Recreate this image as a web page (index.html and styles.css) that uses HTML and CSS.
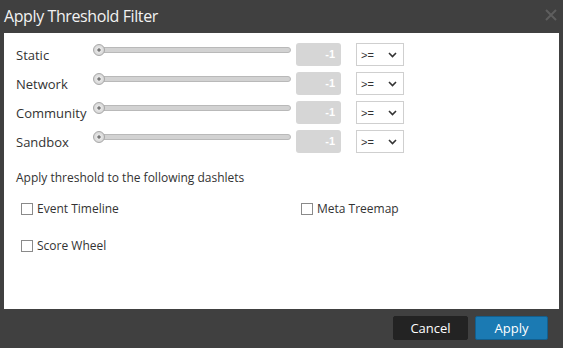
FILE: index.html
```html
<!DOCTYPE html>
<html>
<head>
<meta charset="utf-8">
<link rel="stylesheet" href="styles.css">
</head>
<body>
<div class="dialog">
  <div class="header">
    <span class="title">Apply Threshold Filter</span>
    <svg class="close" width="12" height="12" viewBox="0 0 12 12"><path d="M1 1 L11 11 M11 1 L1 11" stroke="#5e5e5e" stroke-width="2" fill="none"/></svg>
  </div>
  <div class="panel">
    <div class="rows">
      <div class="row">
        <span class="label">Static</span>
        <div class="slider"><div class="track"></div><div class="thumb"></div></div>
        <div class="num">-1</div>
        <div class="select"><span>&gt;=</span><svg width="9" height="6" viewBox="0 0 9 6"><path d="M1 1 L4.5 4.5 L8 1" stroke="#333" stroke-width="1.6" fill="none"/></svg></div>
      </div>
      <div class="row">
        <span class="label">Network</span>
        <div class="slider"><div class="track"></div><div class="thumb"></div></div>
        <div class="num">-1</div>
        <div class="select"><span>&gt;=</span><svg width="9" height="6" viewBox="0 0 9 6"><path d="M1 1 L4.5 4.5 L8 1" stroke="#333" stroke-width="1.6" fill="none"/></svg></div>
      </div>
      <div class="row">
        <span class="label">Community</span>
        <div class="slider"><div class="track"></div><div class="thumb"></div></div>
        <div class="num">-1</div>
        <div class="select"><span>&gt;=</span><svg width="9" height="6" viewBox="0 0 9 6"><path d="M1 1 L4.5 4.5 L8 1" stroke="#333" stroke-width="1.6" fill="none"/></svg></div>
      </div>
      <div class="row">
        <span class="label">Sandbox</span>
        <div class="slider"><div class="track"></div><div class="thumb"></div></div>
        <div class="num">-1</div>
        <div class="select"><span>&gt;=</span><svg width="9" height="6" viewBox="0 0 9 6"><path d="M1 1 L4.5 4.5 L8 1" stroke="#333" stroke-width="1.6" fill="none"/></svg></div>
      </div>
    </div>
    <div class="intro">Apply threshold to the following dashlets</div>
    <div class="checks">
      <label class="check"><span class="box"></span>Event Timeline</label>
      <label class="check"><span class="box"></span>Meta Treemap</label>
      <label class="check"><span class="box"></span>Score Wheel</label>
    </div>
  </div>
  <div class="footer">
    <button class="btn cancel">Cancel</button>
    <button class="btn apply">Apply</button>
  </div>
</div>
</body>
</html>
```
FILE: styles.css
```css
html, body {
  margin: 0;
  padding: 0;
  background: #404040;
  font-family: "Open Sans", "Noto Sans", sans-serif;
}
.dialog {
  width: 563px;
  height: 348px;
  display: flex;
  flex-direction: column;
}
.header {
  height: 33px;
  display: flex;
  align-items: center;
  justify-content: space-between;
  padding: 0 6px 0 4px;
  box-sizing: border-box;
}
.title {
  color: #f2f2f2;
  font-size: 16px;
  letter-spacing: -0.4px;
  margin-top: -2px;
}
.close {
  margin-top: -4px;
}
.panel {
  flex: 1;
  background: #fff;
  margin: 0 4px;
  padding: 10px 12px 0 12px;
}
.rows {
  display: flex;
  flex-direction: column;
  gap: 6px;
}
.row {
  display: grid;
  grid-template-columns: 77px 198px auto auto;
  justify-content: start;
  height: 23px;
  align-items: center;
}
.label {
  font-size: 13px;
  color: #333;
  margin-top: 1px;
}
.slider {
  position: relative;
  height: 12px;
  align-self: start;
  margin-top: 1px;
  width: 198px;
}
.track {
  position: absolute;
  left: 4px;
  right: 0;
  top: 3px;
  height: 4px;
  background: #d2d2d2;
  border: 1px solid #b9b9b9;
  border-radius: 3px;
}
.thumb {
  position: absolute;
  left: 0;
  top: 0;
  width: 10px;
  height: 10px;
  border-radius: 50%;
  border: 1px solid #a8a8a8;
  background: radial-gradient(circle at 50% 50%, #777 0 1.3px, #e8e8e8 2px, #d6d6d6 5px);
}
.num {
  margin-left: 5px;
  width: 45px;
  height: 23px;
  box-sizing: border-box;
  background: #d6d6d6;
  border-radius: 3px;
  color: #fff;
  font-family: "Liberation Sans", sans-serif;
  font-weight: bold;
  font-size: 11px;
  text-align: right;
  padding-right: 6px;
  line-height: 23px;
}
.select {
  margin-left: 15px;
  width: 48px;
  height: 23px;
  box-sizing: border-box;
  border: 1px solid #cfcfcf;
  display: flex;
  align-items: center;
  justify-content: space-between;
  padding: 0 6px 0 4px;
  font-family: "Liberation Sans", sans-serif;
  font-size: 11px;
  color: #333;
}
.intro {
  font-size: 12px;
  color: #333;
  margin-top: 16px;
  line-height: 18px;
}
.checks {
  display: grid;
  grid-template-columns: 280px 1fr;
  row-gap: 19px;
  margin-top: 13px;
  padding-left: 5px;
}
.check {
  display: flex;
  align-items: center;
  gap: 4px;
  font-size: 12px;
  color: #333;
  line-height: 18px;
}
.box {
  width: 10px;
  height: 10px;
  border: 1px solid #8a8a8a;
  background: #fff;
}
.footer {
  height: 39px;
  display: flex;
  justify-content: flex-end;
  align-items: flex-start;
  gap: 7px;
  padding: 7px 15px 0 0;
  box-sizing: border-box;
}
.btn {
  height: 24px;
  border-radius: 2px;
  color: #fff;
  font-family: "Open Sans", sans-serif;
  font-size: 13px;
  padding: 0;
  line-height: 20px;
}
.cancel {
  width: 75px;
  background: #232323;
  border: 1px solid #232323;
}
.apply {
  width: 73px;
  background: #1b7ab3;
  border: 1px solid #135f8e;
}
```
